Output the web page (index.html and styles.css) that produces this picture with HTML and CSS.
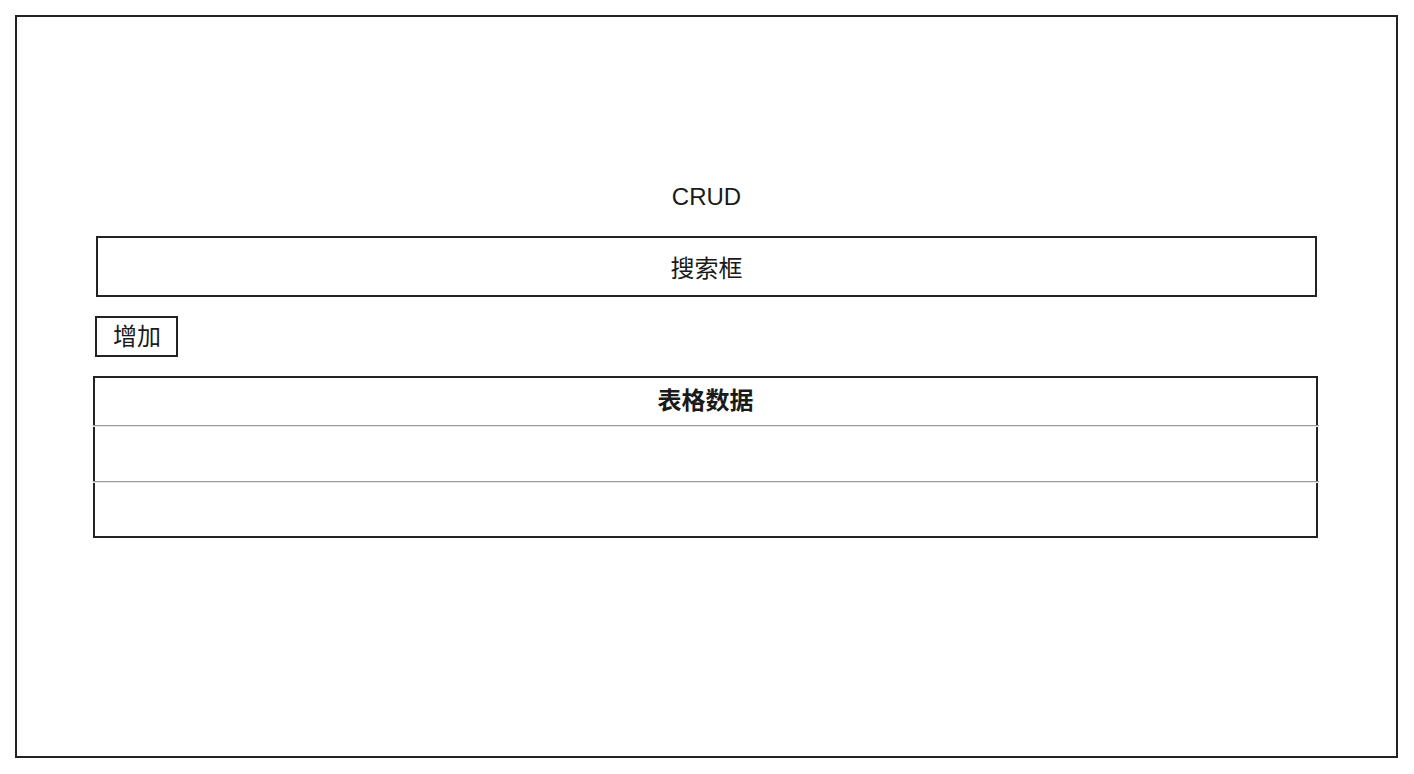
FILE: index.html
```html
<!DOCTYPE html>
<html lang="zh">
<head>
<meta charset="utf-8">
<title>CRUD</title>
<link rel="stylesheet" href="styles.css">
</head>
<body>
<div class="frame">
  <div class="title">CRUD</div>
  <div class="search">搜索框</div>
  <div class="actions"><button class="add-btn">增加</button></div>
  <div class="table">
    <div class="row head">表格数据</div>
    <hr class="sep">
    <div class="row"></div>
    <hr class="sep">
    <div class="row last"></div>
  </div>
</div>
</body>
</html>
```
FILE: styles.css
```css
html, body {
  margin: 0;
  padding: 0;
  background: #fff;
}
body {
  font-family: "Liberation Sans", Arial, "Noto Sans CJK SC", sans-serif;
  font-size: 24px;
  color: #1a1a1a;
}
.frame {
  box-sizing: border-box;
  margin: 15px 0 0 15px;
  width: 1383px;
  height: 743px;
  border: 2px solid #222;
  padding: 166px 79px 0 79px;
}
.title {
  text-align: center;
  line-height: 28px;
  height: 28px;
}
.search {
  margin-top: 25px;
  box-sizing: border-box;
  height: 61px;
  border: 2px solid #222;
  display: flex;
  align-items: center;
  justify-content: center;
}
.actions {
  margin-top: 19px;
  display: flex;
}
.add-btn {
  box-sizing: border-box;
  height: 41px;
  padding: 0 15px 0 16px;
  margin-left: -1px;
  border: 2px solid #222;
  background: #fff;
  font-family: inherit;
  font-size: 24px;
  color: #1a1a1a;
  line-height: 1;
}
.table {
  margin: 19px -1px 0 -3px;
  border: 2px solid #222;
}
.row {
  height: 54px;
}
.row.last {
  height: 53px;
}
.row.head {
  height: 47px;
  font-weight: bold;
  text-align: center;
  line-height: 46px;
}
.sep {
  margin: 0 -3px 0 -2px;
  border: 0;
  height: 0;
  border-top: 1px solid #999;
  border-bottom: 1px solid #e6e6e6;
}
```
